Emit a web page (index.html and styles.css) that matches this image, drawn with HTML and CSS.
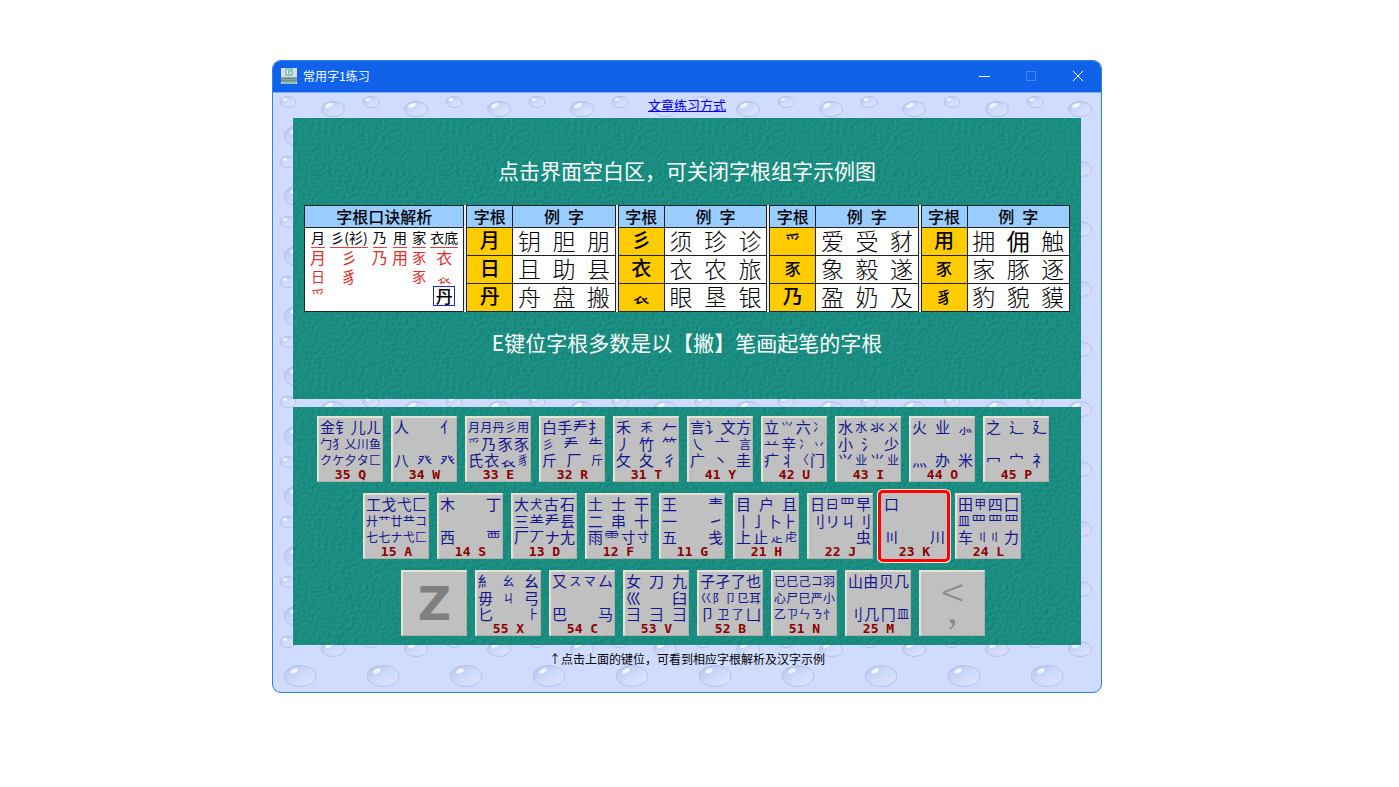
FILE: index.html
```html
<!DOCTYPE html>
<html lang="zh-CN">
<head>
<meta charset="utf-8">
<title>常用字1练习</title>
<link rel="stylesheet" href="styles.css">
</head>

<body>
<div class="window">
    <header>
        <svg class="logo" viewBox="0 0 16 16"><rect width="16" height="16" fill="#cfe4f4"/><rect x="5" y="1" width="6" height="6" fill="#eefaf2" stroke="#4f9c8c"/><path d="M7 3h3M7 5h2" stroke="#2c8878"/><path d="M0 9h16v5H0z" fill="#8aa09c"/><path d="M1 10.500h14M1 12.500h14" stroke="#567a76" stroke-dasharray="1 1"/><path d="M1 15h14" stroke="#3aa58c"/></svg>
        <h1>常用字1练习</h1>
        <button class="ctl" aria-label="最小化"><svg viewBox="0 0 12 12"><path d="M1 6.500h11"/></svg></button>
        <button class="ctl off" aria-label="最大化" disabled><svg viewBox="0 0 12 12"><rect x="1.500" y="1.500" width="9" height="9"/></svg></button>
        <button class="ctl" aria-label="关闭"><svg viewBox="0 0 12 12"><path d="M1 1l10 10M11 1L1 11"/></svg></button>
    </header>

    <main>
        <nav><a href="#">文章练习方式</a></nav>

        <section class="board demo">
            <p>点击界面空白区，可关闭字根组字示例图</p>
            <div class="tables">
                <table class="rhyme">
                    <tr><th>字根口诀解析</th></tr>
                    <tr><td>
                        <div class="cols">
                            <div><u>月</u><em>月</em><em class="s">日</em><em class="s">爫</em></div>
                            <div><u>彡(衫)</u><em>彡</em><em>豸</em></div>
                            <div><u>乃</u><em>乃</em></div>
                            <div><u>用</u><em>用</em></div>
                            <div><u>家</u><em class="s">豕</em><em class="s">豕</em></div>
                            <div><u>衣底</u><em>衣</em><em class="s">𧘇</em><strong>丹</strong></div>
                        </div>
                    </td></tr>
                </table>
                <table>
                    <tr><th>字根</th><th>例&ensp;字</th></tr>
                    <tr><td class="root">月</td><td>钥&ensp;胆&ensp;朋</td></tr>
                    <tr><td class="root">日</td><td>且&ensp;助&ensp;县</td></tr>
                    <tr><td class="root">丹</td><td>舟&ensp;盘&ensp;搬</td></tr>
                </table>
                <table>
                    <tr><th>字根</th><th>例&ensp;字</th></tr>
                    <tr><td class="root">彡</td><td>须&ensp;珍&ensp;诊</td></tr>
                    <tr><td class="root">衣</td><td>衣&ensp;农&ensp;旅</td></tr>
                    <tr><td class="root s">𧘇</td><td>眼&ensp;垦&ensp;银</td></tr>
                </table>
                <table>
                    <tr><th>字根</th><th>例&ensp;字</th></tr>
                    <tr><td class="root s">爫</td><td>爱&ensp;受&ensp;豺</td></tr>
                    <tr><td class="root s">豕</td><td>象&ensp;毅&ensp;遂</td></tr>
                    <tr><td class="root">乃</td><td>盈&ensp;奶&ensp;及</td></tr>
                </table>
                <table>
                    <tr><th>字根</th><th>例&ensp;字</th></tr>
                    <tr><td class="root">用</td><td>拥&ensp;<b>佣</b>&ensp;触</td></tr>
                    <tr><td class="root s">豕</td><td>家&ensp;豚&ensp;逐</td></tr>
                    <tr><td class="root s">豸</td><td>豹&ensp;貌&ensp;貘</td></tr>
                </table>
            </div>
            <p>E键位字根多数是以【撇】笔画起笔的字根</p>
        </section>

        <section class="board keys">
            <div class="line top">
                <button class="key"><span class="roots"><span><i>金</i><i>钅</i><i>儿</i><i>ㄦ</i></span><span class="m"><i>勹</i><i>犭</i><i>乂</i><i>川</i><i>鱼</i></span><span class="m"><i>ク</i><i>ケ</i><i>夕</i><i>タ</i><i>匚</i></span></span><kbd>35 Q</kbd></button>
                <button class="key"><span class="roots"><span><i>人</i><i>亻</i></span><span><i>八</i><i>癶</i><i>癶</i></span></span><kbd>34 W</kbd></button>
                <button class="key"><span class="roots"><span class="m"><i>月</i><i>月</i><i>丹</i><i>彡</i><i>用</i></span><span><i class="s">爫</i><i>乃</i><i>豕</i><i>豕</i></span><span><i>氏</i><i>衣</i><i>𧘇</i><i class="s">豸</i></span></span><kbd>33 E</kbd></button>
                <button class="key"><span class="roots"><span><i>白</i><i>手</i><i>龵</i><i>扌</i></span><span><i class="s">彡</i><i>龵</i><i>⺧</i></span><span><i>斤</i><i>厂</i><i class="s">斤</i></span></span><kbd>32 R</kbd></button>
                <button class="key"><span class="roots"><span><i>禾</i><i class="s">禾</i><i>𠂉</i></span><span><i>丿</i><i>竹</i><i>⺮</i></span><span><i>攵</i><i>夂</i><i>彳</i></span></span><kbd>31 T</kbd></button>
                <button class="key"><span class="roots"><span><i>言</i><i>讠</i><i>文</i><i>方</i></span><span><i>㇏</i><i>亠</i><i class="s">言</i></span><span><i>广</i><i>丶</i><i>圭</i></span></span><kbd>41 Y</kbd></button>
                <button class="key"><span class="roots"><span><i>立</i><i class="s">⺍</i><i>六</i><i class="s">冫</i></span><span><i>䒑</i><i>辛</i><i class="s">冫</i><i class="s">丷</i></span><span><i>疒</i><i>丬</i><i class="s">〈</i><i>门</i></span></span><kbd>42 U</kbd></button>
                <button class="key"><span class="roots"><span><i>水</i><i class="s">水</i><i>氺</i><i class="s">ㄨ</i></span><span><i>小</i><i>氵</i><i>少</i></span><span><i>⺍</i><i class="s">业</i><i>⺌</i><i class="s">业</i></span></span><kbd>43 I</kbd></button>
                <button class="key"><span class="roots"><span><i>火</i><i>业</i><i>⺗</i></span><span><i>灬</i><i>办</i><i>米</i></span></span><kbd>44 O</kbd></button>
                <button class="key"><span class="roots"><span><i>之</i><i>辶</i><i>廴</i></span><span><i>冖</i><i>宀</i><i>礻</i></span></span><kbd>45 P</kbd></button>
            </div>
            <div class="line mid">
                <button class="key"><span class="roots"><span><i>工</i><i>戈</i><i>弋</i><i>匚</i></span><span class="m"><i>廾</i><i>艹</i><i>廿</i><i>龷</i><i>コ</i></span><span class="m"><i>七</i><i>七</i><i>ナ</i><i>弋</i><i>匚</i></span></span><kbd>15 A</kbd></button>
                <button class="key"><span class="roots"><span><i>木</i><i>丁</i></span><span><i>西</i><i>覀</i></span></span><kbd>14 S</kbd></button>
                <button class="key"><span class="roots"><span><i>大</i><i class="s">犬</i><i>古</i><i>石</i></span><span><i>三</i><i>⺷</i><i>龵</i><i>镸</i></span><span><i>厂</i><i>丆</i><i>ナ</i><i>尢</i></span></span><kbd>13 D</kbd></button>
                <button class="key"><span class="roots"><span><i>土</i><i>士</i><i>干</i></span><span><i>二</i><i>串</i><i>十</i></span><span><i>雨</i><i>⻗</i><i>寸</i><i class="s">寸</i></span></span><kbd>12 F</kbd></button>
                <button class="key"><span class="roots"><span><i>王</i><i>龶</i></span><span><i>一</i><i>㇀</i></span><span><i>五</i><i>戋</i></span></span><kbd>11 G</kbd></button>
                <button class="key"><span class="roots"><span><i>目</i><i>户</i><i>且</i></span><span><i>丨</i><i>亅</i><i>卜</i><i>⺊</i></span><span><i>上</i><i>止</i><i class="s">龰</i><i class="s">虍</i></span></span><kbd>21 H</kbd></button>
                <button class="key"><span class="roots"><span><i>日</i><i class="s">曰</i><i>罒</i><i>早</i></span><span><i>刂</i><i>リ</i><i>ㄐ</i><i>刂</i></span><span class="end"><i>虫</i></span></span><kbd>22 J</kbd></button>
                <button class="key on"><span class="roots"><span><i>口</i></span><span><i>〣</i><i>川</i></span></span><kbd>23 K</kbd></button>
                <button class="key"><span class="roots"><span><i>田</i><i class="s">甲</i><i>四</i><i>囗</i></span><span><i class="s">皿</i><i>罒</i><i>罒</i><i>罒</i></span><span><i>车</i><i class="s">〢〢</i><i>力</i></span></span><kbd>24 L</kbd></button>
            </div>
            <div class="line low">
                <button class="key"><span class="zed">Z</span></button>
                <button class="key"><span class="roots"><span><i>糹</i><i class="s">幺</i><i>幺</i></span><span><i>毋</i><i class="s">ㄐ</i><i>弓</i></span><span><i>匕</i><i class="s">⺊</i></span></span><kbd>55 X</kbd></button>
                <button class="key"><span class="roots"><span><i>又</i><i class="s">ス</i><i class="s">マ</i><i>厶</i></span><span><i>巴</i><i>马</i></span></span><kbd>54 C</kbd></button>
                <button class="key"><span class="roots"><span><i>女</i><i>刀</i><i>九</i></span><span><i>巛</i><i>臼</i></span><span><i>彐</i><i>⺕</i><i>⺕</i></span></span><kbd>53 V</kbd></button>
                <button class="key"><span class="roots"><span><i>子</i><i>孑</i><i>了</i><i>也</i></span><span class="m"><i>巜</i><i>阝</i><i>卩</i><i>㔾</i><i>耳</i></span><span><i>卩</i><i class="s">卫</i><i class="s">了</i><i>凵</i></span></span><kbd>52 B</kbd></button>
                <button class="key"><span class="roots"><span class="m"><i>已</i><i>巳</i><i>己</i><i>コ</i><i>羽</i></span><span class="m"><i>心</i><i>尸</i><i>巳</i><i>严</i><i>小</i></span><span class="m"><i>乙</i><i>ㄗ</i><i>ㄣ</i><i>ㄋ</i><i>忄</i></span></span><kbd>51 N</kbd></button>
                <button class="key"><span class="roots"><span><i>山</i><i>由</i><i>贝</i><i>几</i></span><span><i>刂</i><i>几</i><i>冂</i><i class="s">皿</i></span></span><kbd>25 M</kbd></button>
                <button class="key"><span class="comma"><span>&lt;</span><b>,</b></span></button>
            </div>
        </section>

        <footer>↑点击上面的键位，可看到相应字根解析及汉字示例</footer>
    </main>
</div>
</body>

</html>
```
FILE: styles.css
```css
* {
    box-sizing:border-box;
}

body {
    margin:0;
    padding:60px 297px 60px 272px;
    background-color:white;
    font-family:"Noto Sans CJK SC", sans-serif;
}

button {
    padding:0;
    border:0;
    background:none;
    font-family:inherit;
}

.window {
    min-width:830px;
    border:1px solid #2f7ff0;
    border-radius:9px;
    overflow:hidden;
    background-color:#d0dcfe;
}

header {
    display:flex;
    align-items:center;
    height:31px;
    padding:0 0 2px 8px;
    background-color:#1062ea;
    color:white;
}

.logo {
    width:16px;
    height:16px;
    margin-right:6px;
}

h1 {
    flex:1;
    margin:0;
    font-size:12px;
    font-weight:400;
    line-height:16px;
}

.ctl {
    display:flex;
    align-items:center;
    justify-content:center;
    width:47px;
    height:28px;
}

.ctl svg {
    width:12px;
    height:12px;
    fill:none;
    stroke:white;
}

.ctl.off svg {
    stroke:#3f86f5;
}

/* bubble wallpaper, 83x60 tile */
main {
    padding:0 20px;
    border-top:1px solid #7fb0f6;
    background-image:url("data:image/svg+xml,%3Csvg xmlns='http://www.w3.org/2000/svg' width='83' height='60'%3E%3Cdefs%3E%3ClinearGradient id='g' x1='0' y1='0' x2='1' y2='1'%3E%3Cstop offset='0' stop-color='%23b4c2ee'/%3E%3Cstop offset='.5' stop-color='%23cfdafa'/%3E%3Cstop offset='1' stop-color='%23e4e4ff'/%3E%3C/linearGradient%3E%3C/defs%3E%3Cg fill='url(%23g)' stroke='%23b2c0ea'%3E%3Cellipse cx='15' cy='9' rx='8' ry='5.500'/%3E%3Cellipse cx='60' cy='16' rx='11.500' ry='7.500'/%3E%3Cellipse cx='27' cy='43' rx='16' ry='10.500'/%3E%3C/g%3E%3Cg fill='%23f2f5ff'%3E%3Cellipse cx='12' cy='6.500' rx='2.500' ry='1.500'/%3E%3Cellipse cx='56' cy='12.500' rx='4' ry='2' transform='rotate(-25 56 12.500)'/%3E%3Cellipse cx='21' cy='38' rx='4' ry='2' transform='rotate(-25 21 38)'/%3E%3C/g%3E%3C/svg%3E");
}

nav {
    height:25px;
    padding-top:3px;
    text-align:center;
    font-size:13px;
    line-height:18px;
}

nav a {
    color:#0000ee;
}

/* chalkboard texture */
.board {
    background-color:#1a8c80;
    background-image:url("data:image/svg+xml,%3Csvg xmlns='http://www.w3.org/2000/svg' width='128' height='128'%3E%3Cfilter id='n' x='0' y='0' width='100%25' height='100%25' color-interpolation-filters='sRGB'%3E%3CfeTurbulence type='fractalNoise' baseFrequency='.3' numOctaves='2' seed='4' stitchTiles='stitch'/%3E%3CfeDiffuseLighting surfaceScale='.4' lighting-color='%231ea294'%3E%3CfeDistantLight azimuth='225' elevation='60'/%3E%3C/feDiffuseLighting%3E%3C/filter%3E%3Crect width='128' height='128' filter='url(%23n)'/%3E%3C/svg%3E");
}

.demo {
    padding:37px 11px 42px;
    margin-bottom:8px;
}

.demo p {
    margin:0;
    color:white;
    font-size:21px;
    line-height:30px;
    text-align:center;
}

.tables {
    display:flex;
    gap:2px;
    margin:20px 0 15px;
    background-color:#e8ecec;
}

table {
    flex:149;
    border-collapse:collapse;
    background-color:white;
    color:black;
}

table.rhyme {
    flex:160;
}

th, td {
    padding:0;
    border:1px solid #222;
    text-align:center;
    white-space:pre;
}

th {
    height:22px;
    padding-bottom:2px;
    background-color:#99ccff;
    font-size:16px;
    font-weight:500;
    line-height:18px;
}

td {
    height:28px;
    padding-bottom:4px;
    font-size:23px;
    font-weight:300;
    line-height:22px;
}

td.root {
    width:46px;
    background-color:#ffcc00;
    font-size:20px;
    font-weight:500;
}

td.root.s {
    font-size:16px;
}

.rhyme td {
    height:83px;
    padding:0;
    vertical-align:top;
    white-space:normal;
}

.cols {
    display:flex;
    justify-content:space-between;
    padding:0 5px;
}

.cols div {
    display:flex;
    flex-direction:column;
    align-items:center;
}

.cols u {
    border-bottom:1px solid #e04040;
    font-size:14px;
    font-weight:400;
    line-height:19px;
    text-decoration:none;
}

.cols em {
    color:#dd3030;
    font-size:16px;
    font-style:normal;
    font-weight:400;
    line-height:19px;
}

.cols em.s {
    font-size:14px;
}

.cols strong {
    width:22px;
    height:20px;
    border:1px solid #2020ee;
    font-size:17px;
    font-weight:500;
    line-height:18px;
}

.keys {
    display:flex;
    flex-direction:column;
    gap:11px;
    padding:9px 0;
}

.line {
    display:flex;
    gap:8px;
}

.top {
    padding-left:24px;
}

.mid {
    padding-left:70px;
}

.low {
    padding-left:108px;
}

.key {
    display:flex;
    flex-direction:column;
    width:66px;
    height:66px;
    border:1px solid #b0b0a8;
    border-top:2px solid #e4e4d6;
    border-left:2px solid #e4e4d6;
    background-color:#c0c0c0;
}

.key.on {
    border-color:#c0c0c0;
    outline:3px solid #ff0000;
    box-shadow:0 0 0 4px #f4e4dc;
    border-radius:2px;
}

.roots {
    display:flex;
    flex-direction:column;
    justify-content:space-between;
    align-self:stretch;
    height:50px;
    padding:1px 1px 0;
    color:#14148c;
}

.roots > span {
    display:flex;
    align-items:center;
    justify-content:space-between;
    height:16px;
    font-size:15px;
    line-height:16px;
}

.roots > span.m {
    font-size:12px;
}

.roots > span.end {
    justify-content:flex-end;
}

.roots i {
    font-style:normal;
    white-space:nowrap;
}

.roots i.s {
    font-size:12px;
}

kbd {
    align-self:center;
    color:#8c0000;
    font-family:"DejaVu Sans Mono", monospace;
    font-size:13px;
    font-weight:bold;
    line-height:13px;
    white-space:pre;
}

.zed {
    margin:auto;
    color:#808080;
    font-family:"DejaVu Sans", sans-serif;
    font-size:46px;
    font-weight:bold;
    line-height:60px;
}

.comma {
    display:flex;
    flex-direction:column;
    align-items:center;
    margin:0 auto;
    color:#8a8a8a;
    font-size:42px;
    font-weight:300;
    line-height:36px;
}

.comma b {
    font-family:"Liberation Serif", serif;
    font-size:40px;
    line-height:4px;
}

footer {
    height:47px;
    padding-top:5px;
    color:black;
    font-size:12px;
    line-height:18px;
    text-align:center;
}
```
